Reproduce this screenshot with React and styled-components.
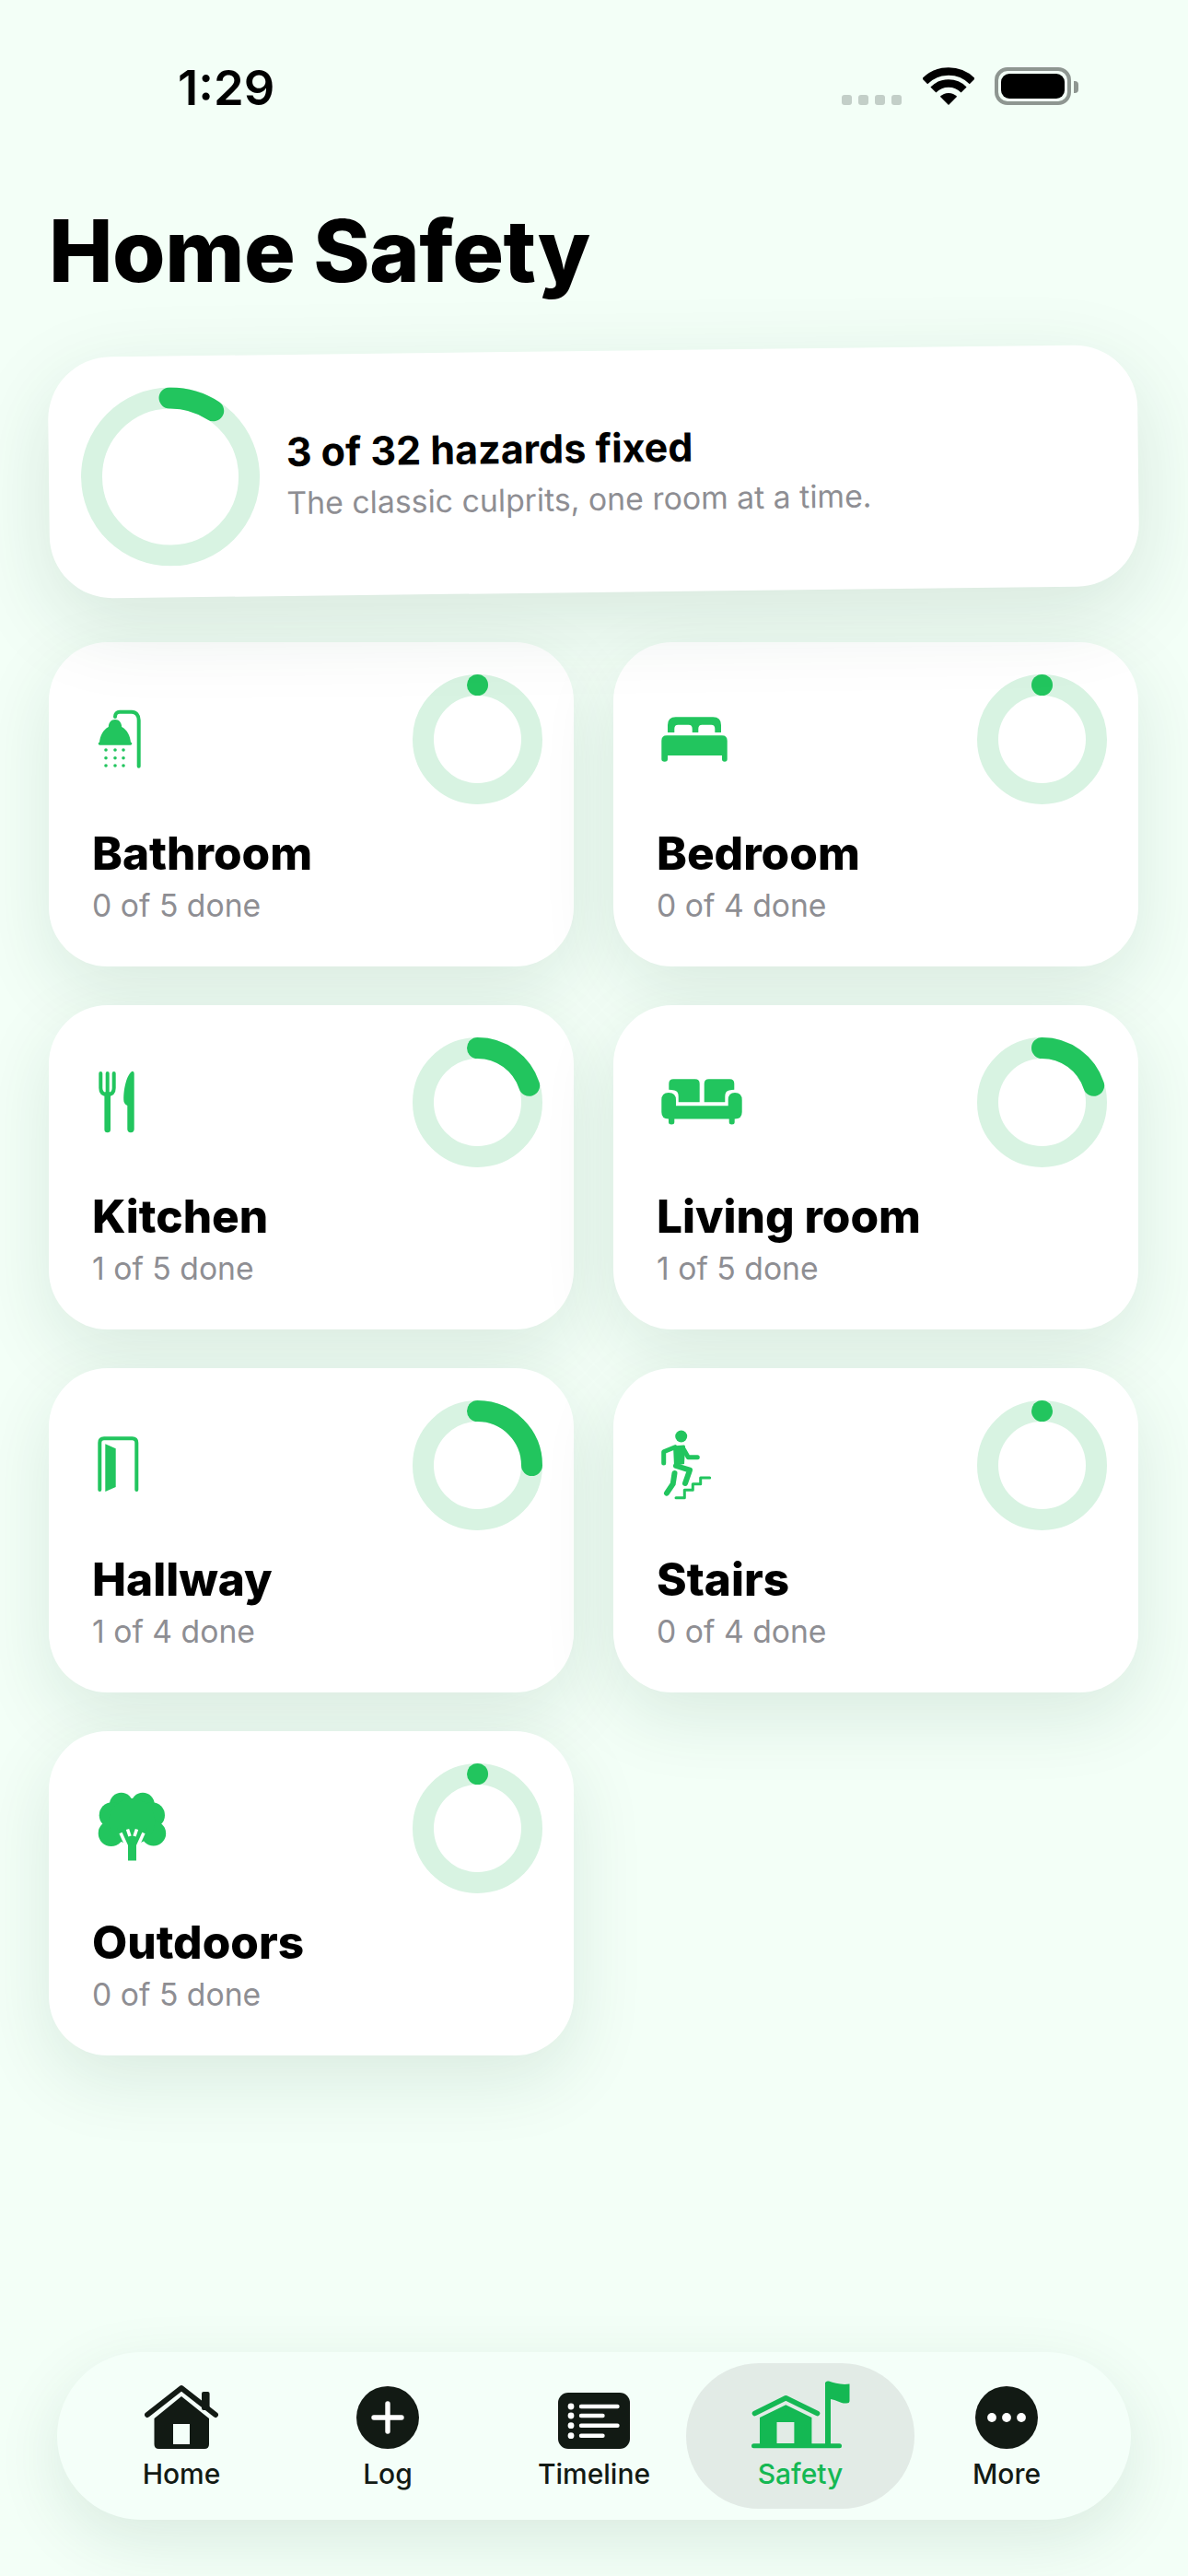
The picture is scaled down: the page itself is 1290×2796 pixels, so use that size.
import styled, { createGlobalStyle } from 'styled-components';

const GREEN = '#22c55e';
const NAV_GREEN = '#14b853';
const INK = '#121a14';

const GlobalStyle = createGlobalStyle`
  html, body {
    margin: 0;
    padding: 0;
    background: #f3fff7;
  }
  * {
    box-sizing: border-box;
  }
`;

const Page = styled.div`
  width: 1290px;
  height: 2796px;
  display: flex;
  flex-direction: column;
  overflow: hidden;
  background: #f3fff7;
  font-family: Inter, 'Noto Sans', sans-serif;
  color: #000;
`;

const StatusBar = styled.div`
  display: flex;
  justify-content: space-between;
  align-items: flex-end;
  height: 41px;
  margin-top: 73px;
  padding: 0 119px 0 193px;
`;

const Time = styled.div`
  margin-bottom: -2px;
  font-size: 52.5px;
  line-height: 41px;
  font-weight: 600;
`;

const StatusIcons = styled.div`
  display: flex;
  align-items: flex-end;
`;

const SignalDots = styled.div`
  display: flex;
  gap: 7px;
  margin-right: 23px;
`;

const SignalDot = styled.span`
  width: 11px;
  height: 11px;
  border-radius: 3px;
  background: #c3cfc8;
`;

const Battery = styled.div`
  width: 83px;
  height: 41px;
  margin-left: 22px;
  padding: 3px;
  border: 4px solid #8e9691;
  border-radius: 14px;
`;

const BatteryFill = styled.div`
  width: 100%;
  height: 100%;
  border-radius: 9px;
  background: #000;
`;

const BatteryCap = styled.div`
  width: 5px;
  height: 13px;
  margin: 0 0 13px 3px;
  border-radius: 0 4px 4px 0;
  background: #8e9691;
`;

const Title = styled.h1`
  margin: 103px 0 0 53px;
  font-size: 93px;
  line-height: 110px;
  font-weight: 800;
  letter-spacing: -0.5px;
`;

const Content = styled.div`
  padding: 0 54px 0 53px;
`;

const HeroCard = styled.div`
  display: flex;
  align-items: center;
  gap: 29px;
  height: 262px;
  margin-top: 54px;
  padding-left: 35px;
  border-radius: 68px;
  background: #fff;
  box-shadow: 0 28px 90px rgba(20, 70, 45, 0.13);
  transform: rotate(-0.68deg);
`;

const HeroTitle = styled.div`
  margin-top: -2px;
  font-size: 43px;
  line-height: 50px;
  font-weight: 700;
`;

const HeroSub = styled.div`
  margin-top: 11px;
  font-size: 33.8px;
  line-height: 40px;
  color: #8e8e93;
`;

const RoomGrid = styled.div`
  display: grid;
  grid-template-columns: 570px 570px;
  grid-auto-rows: 352px;
  gap: 42px 43px;
  margin-top: 54px;
`;

const RoomCard = styled.div`
  padding: 35px 34px 0 47px;
  border-radius: 64px;
  background: #fff;
  box-shadow: 0 26px 80px rgba(20, 70, 45, 0.11);
`;

const RoomHead = styled.div`
  display: flex;
  justify-content: space-between;
  align-items: flex-start;
`;

const RoomIcon = styled.svg`
  display: block;
  width: 96px;
  height: 96px;
  margin-top: 25px;
  color: ${GREEN};
`;

const RoomName = styled.div`
  margin-top: 25px;
  font-size: 49.5px;
  line-height: 56px;
  font-weight: 800;
`;

const RoomSub = styled.div`
  margin-top: 9px;
  font-size: 33.7px;
  line-height: 40px;
  color: #8e8e93;
`;

const Nav = styled.nav`
  display: grid;
  grid-template-columns: repeat(5, 224px);
  align-items: center;
  width: 1166px;
  height: 182px;
  margin: auto 0 61px 62px;
  padding: 0 23px;
  border-radius: 91px;
  background: #f4fff9;
  box-shadow: 0 22px 70px rgba(20, 70, 45, 0.11);
`;

const NavItem = styled.div`
  display: flex;
  flex-direction: column;
  align-items: center;
  height: 158px;
  margin: 0 ${(p) => (p.$active ? '-12px' : '0')};
  border-radius: 79px;
  background: ${(p) => (p.$active ? '#e2ebe6' : 'transparent')};
  color: ${(p) => (p.$active ? NAV_GREEN : INK)};
`;

const NavIconBox = styled.div`
  display: flex;
  align-items: flex-end;
  justify-content: center;
  height: 93px;
  svg {
    display: block;
  }
`;

const NavLabel = styled.div`
  margin-top: 10px;
  font-size: 30px;
  line-height: 34px;
  font-weight: 500;
`;

const RingSvg = styled.svg`
  display: block;
  flex-shrink: 0;
`;

const Ring = ({ size, done, total }) => {
  const stroke = 23;
  const c = size / 2;
  const r = c - stroke / 2;
  const pct = (done / total) * 100;
  return (
    <RingSvg width={size} height={size} viewBox={`0 0 ${size} ${size}`}>
      <circle cx={c} cy={c} r={r} fill="none" stroke="#d8f3e2" strokeWidth={stroke} />
      <circle
        cx={c}
        cy={c}
        r={r}
        fill="none"
        stroke={GREEN}
        strokeWidth={stroke}
        strokeLinecap="round"
        pathLength="100"
        strokeDasharray={`${pct || 0.01} 100`}
        transform={`rotate(-90 ${c} ${c})`}
      />
    </RingSvg>
  );
};

const ShowerIcon = () => (
  <RoomIcon viewBox="0 0 96 96" fill="currentColor">
    <path d="M50.7 74.7V24.7C50.7 19 47.5 15.7 43 15.7H30C27 15.7 25 17.7 25 21" fill="none" stroke="currentColor" strokeWidth="4" strokeLinecap="round" />
    <path d="M25 24C20.5 24 18 27.5 17.8 32C12 35 8.5 42 8 49H42C41.5 42 38 35 32.2 32C32 27.5 29.5 24 25 24Z" />
    <rect x="6.7" y="48.5" width="36.6" height="3.2" rx="1.6" />
    {[15, 25, 34].map((x) =>
      [57, 65.7, 74].map((y) => <circle key={`${x}-${y}`} cx={x} cy={y} r="1.8" />)
    )}
  </RoomIcon>
);

const BedIcon = () => (
  <RoomIcon viewBox="0 0 96 96" fill="currentColor">
    <path d="M12 38V30Q12 21.3 20.7 21.3H61.3Q70 21.3 70 30V38H63.3V34Q63.3 29.7 59.3 29.7H49.3Q45.3 29.7 45.3 34V38H38.7V34Q38.7 29.7 34.7 29.7H23.3Q19.3 29.7 19.3 34V38Z" />
    <path d="M11 41.3H71Q76.7 41.3 76.7 47V67Q76.7 69.7 73.9 69.7Q71 69.7 71 67V63H12V67Q12 69.7 8.7 69.7Q5.3 69.7 5.3 67V47Q5.3 41.3 11 41.3Z" />
  </RoomIcon>
);

const CutleryIcon = () => (
  <RoomIcon viewBox="0 0 96 96" fill="currentColor">
    <path d="M9.3 14V30Q9.3 37 16.7 37Q23.7 37 23.7 30V14M16.7 14V37" fill="none" stroke="currentColor" strokeWidth="4" strokeLinecap="round" />
    <path d="M16.7 37V75" fill="none" stroke="currentColor" strokeWidth="6.6" strokeLinecap="round" />
    <path d="M45.7 14Q45.7 11.8 43.5 11.8C38 15 34 30 34.3 43Q34.3 47 38.3 49V74.5A3.7 3.7 0 0 0 45.7 74.5Z" />
  </RoomIcon>
);

const SofaIcon = () => (
  <RoomIcon viewBox="0 0 96 96" fill="currentColor">
    <path d="M13.3 31.8V25.2Q13.3 20.2 18.3 20.2H41.7Q46.7 20.2 46.7 25.2V45.2H23.7V39Q23.7 33.5 19.3 32.6Q16 31.8 13.3 31.8Z" />
    <path d="M84.3 31.8V25.2Q84.3 20.2 79.3 20.2H56.7Q51.7 20.2 51.7 25.2V45.2H74.3V39Q74.3 33.5 78.7 32.6Q82 31.8 84.3 31.8Z" />
    <path d="M13 35Q5.3 35 5.3 43V56Q5.3 63.5 13 63.5V67Q13 69.5 16.2 69.5Q19.3 69.5 19.3 67V63.5H78.7V67Q78.7 69.5 81.7 69.5Q84.7 69.5 84.7 67V63.5H85Q92.7 63.5 92.7 56V43Q92.7 35 85 35Q77.7 35 77.7 43V49.2H21V43Q21 35 13 35Z" />
  </RoomIcon>
);

const DoorIcon = () => (
  <RoomIcon viewBox="0 0 96 96" fill="currentColor">
    <path d="M8.3 72V21Q8.3 16.3 13 16.3H43.6Q48.3 16.3 48.3 21V72" fill="none" stroke="currentColor" strokeWidth="4" strokeLinecap="round" />
    <path d="M14.3 22.3L25.7 27.3V69L14.3 74Z" />
  </RoomIcon>
);

const StairsIcon = () => (
  <RoomIcon viewBox="0 0 96 96" fill="currentColor">
    <circle cx="26.7" cy="14" r="6.5" />
    <path d="M18 24.5L29.5 23.5Q31.5 23.5 31 27L30 44L19 46Z" />
    <g fill="none" stroke="currentColor" strokeLinecap="round" strokeLinejoin="round">
      <path d="M20 25.7L7.7 30.7V43" strokeWidth="5" />
      <path d="M29.3 28L34.3 36.7H44.3" strokeWidth="5" />
      <path d="M21 46L36 50.7L31 65" strokeWidth="6" />
      <path d="M19.5 54L17.7 65.7L11 75.7" strokeWidth="6" />
      <path d="M21 80.7H30.3V72.3H39.3V65.7H47.7V59H57.7" strokeWidth="3" />
    </g>
  </RoomIcon>
);

const TreeIcon = () => (
  <RoomIcon viewBox="0 0 96 96" fill="currentColor">
    <circle cx="31.7" cy="19.5" r="12.7" />
    <circle cx="55" cy="19.5" r="12.7" />
    <circle cx="21.7" cy="31.2" r="14" />
    <circle cx="65" cy="31.2" r="14" />
    <circle cx="20.7" cy="51" r="14" />
    <circle cx="66.7" cy="51" r="13.5" />
    <circle cx="43.3" cy="38" r="25" />
    <path d="M27 45L37 65H50L60 45Z" />
    <path d="M31 50.5L38 66M56 50.5L49 66M38.5 46.5L41 54M48.5 46.5L46 54" fill="none" stroke="#fff" strokeWidth="3.5" />
    <path d="M39 62H48V80.5H39Z" />
    <path d="M39.5 58L43.5 64L47.5 58L48 66H39Z" />
  </RoomIcon>
);

const HomeIcon = () => (
  <svg width="80" height="70" viewBox="0 0 80 70" fill="currentColor">
    <path d="M3 33L40 4L77 33" fill="none" stroke="currentColor" strokeWidth="6" strokeLinecap="round" strokeLinejoin="round" />
    <rect x="62" y="8" width="8.6" height="20" rx="2" />
    <path fillRule="evenodd" d="M40 13L10.5 37V65Q10.5 70 15.5 70H65Q70 70 70 65V37ZM31 43H49V65H31Z" />
  </svg>
);

const PlusIcon = () => (
  <svg width="68" height="68" viewBox="0 0 68 68">
    <circle cx="34" cy="34" r="34" fill="currentColor" />
    <path d="M34 19V49M19 34H49" stroke="#fff" strokeWidth="5.4" strokeLinecap="round" />
  </svg>
);

const TimelineIcon = () => (
  <svg width="78" height="61" viewBox="0 0 78 61">
    <rect width="78" height="61" rx="11" fill="currentColor" />
    {[15, 25, 35.7, 46.7].map((y) => (
      <circle key={y} cx="14" cy={y} r="3.4" fill="#fff" />
    ))}
    <path d="M25 15H64.5M25 25H48.5M25 35.7H64.5M25 46.7H48.5" stroke="#fff" strokeWidth="4.4" strokeLinecap="round" />
  </svg>
);

const SafetyIcon = () => (
  <svg width="107" height="74" viewBox="0 0 107 74" fill="currentColor">
    <path d="M3.5 35.5L37.3 18.7L71.5 35.5" fill="none" stroke="currentColor" strokeWidth="5.6" strokeLinecap="round" strokeLinejoin="round" />
    <path fillRule="evenodd" d="M37.3 26.3L9 40V69H65.4V40ZM27.5 45H46.4V68H27.5Z" />
    <rect x="0" y="68.3" width="98" height="5" rx="2.5" />
    <rect x="80" y="2" width="6" height="68" />
    <path d="M80 3C80 1 82 0 84 0.6C90 2.5 98 5 106.5 3.5V22Q106.5 24.5 103 24.5C97 25 92 21 86 20H80Z" />
  </svg>
);

const MoreIcon = () => (
  <svg width="68" height="68" viewBox="0 0 68 68">
    <circle cx="34" cy="34" r="34" fill="currentColor" />
    {[18, 34, 50].map((x) => (
      <circle key={x} cx={x} cy="34" r="4.9" fill="#fff" />
    ))}
  </svg>
);

const rooms = [
  { name: 'Bathroom', done: 0, total: 5, Icon: ShowerIcon },
  { name: 'Bedroom', done: 0, total: 4, Icon: BedIcon },
  { name: 'Kitchen', done: 1, total: 5, Icon: CutleryIcon },
  { name: 'Living room', done: 1, total: 5, Icon: SofaIcon },
  { name: 'Hallway', done: 1, total: 4, Icon: DoorIcon },
  { name: 'Stairs', done: 0, total: 4, Icon: StairsIcon },
  { name: 'Outdoors', done: 0, total: 5, Icon: TreeIcon },
];

const tabs = [
  { label: 'Home', Icon: HomeIcon },
  { label: 'Log', Icon: PlusIcon },
  { label: 'Timeline', Icon: TimelineIcon },
  { label: 'Safety', Icon: SafetyIcon, active: true },
  { label: 'More', Icon: MoreIcon },
];

const App = () => {
  return (
    <Page>
      <GlobalStyle />
      <StatusBar>
        <Time>1:29</Time>
        <StatusIcons>
          <SignalDots>
            {[0, 1, 2, 3].map((i) => (
              <SignalDot key={i} />
            ))}
          </SignalDots>
          <svg width="56" height="41" viewBox="0 0 56 41">
            <g fill="none" stroke="#000" strokeWidth="8.5">
              <path d="M2.2 15.2A36.5 36.5 0 0 1 53.8 15.2" />
              <path d="M11.4 24.4A23.5 23.5 0 0 1 44.6 24.4" />
            </g>
            <path d="M28 41L18.8 31.8A13 13 0 0 1 37.2 31.8Z" />
          </svg>
          <Battery>
            <BatteryFill />
          </Battery>
          <BatteryCap />
        </StatusIcons>
      </StatusBar>

      <Title>Home Safety</Title>

      <Content>
        <HeroCard>
          <Ring size={194} done={3} total={32} />
          <div>
            <HeroTitle>3 of 32 hazards fixed</HeroTitle>
            <HeroSub>The classic culprits, one room at a time.</HeroSub>
          </div>
        </HeroCard>

        <RoomGrid>
          {rooms.map(({ name, done, total, Icon }) => (
            <RoomCard key={name}>
              <RoomHead>
                <Icon />
                <Ring size={141} done={done} total={total} />
              </RoomHead>
              <RoomName>{name}</RoomName>
              <RoomSub>
                {done} of {total} done
              </RoomSub>
            </RoomCard>
          ))}
        </RoomGrid>
      </Content>

      <Nav>
        {tabs.map(({ label, Icon, active }) => (
          <NavItem key={label} $active={active}>
            <NavIconBox>
              <Icon />
            </NavIconBox>
            <NavLabel>{label}</NavLabel>
          </NavItem>
        ))}
      </Nav>
    </Page>
  );
};

export default App;
